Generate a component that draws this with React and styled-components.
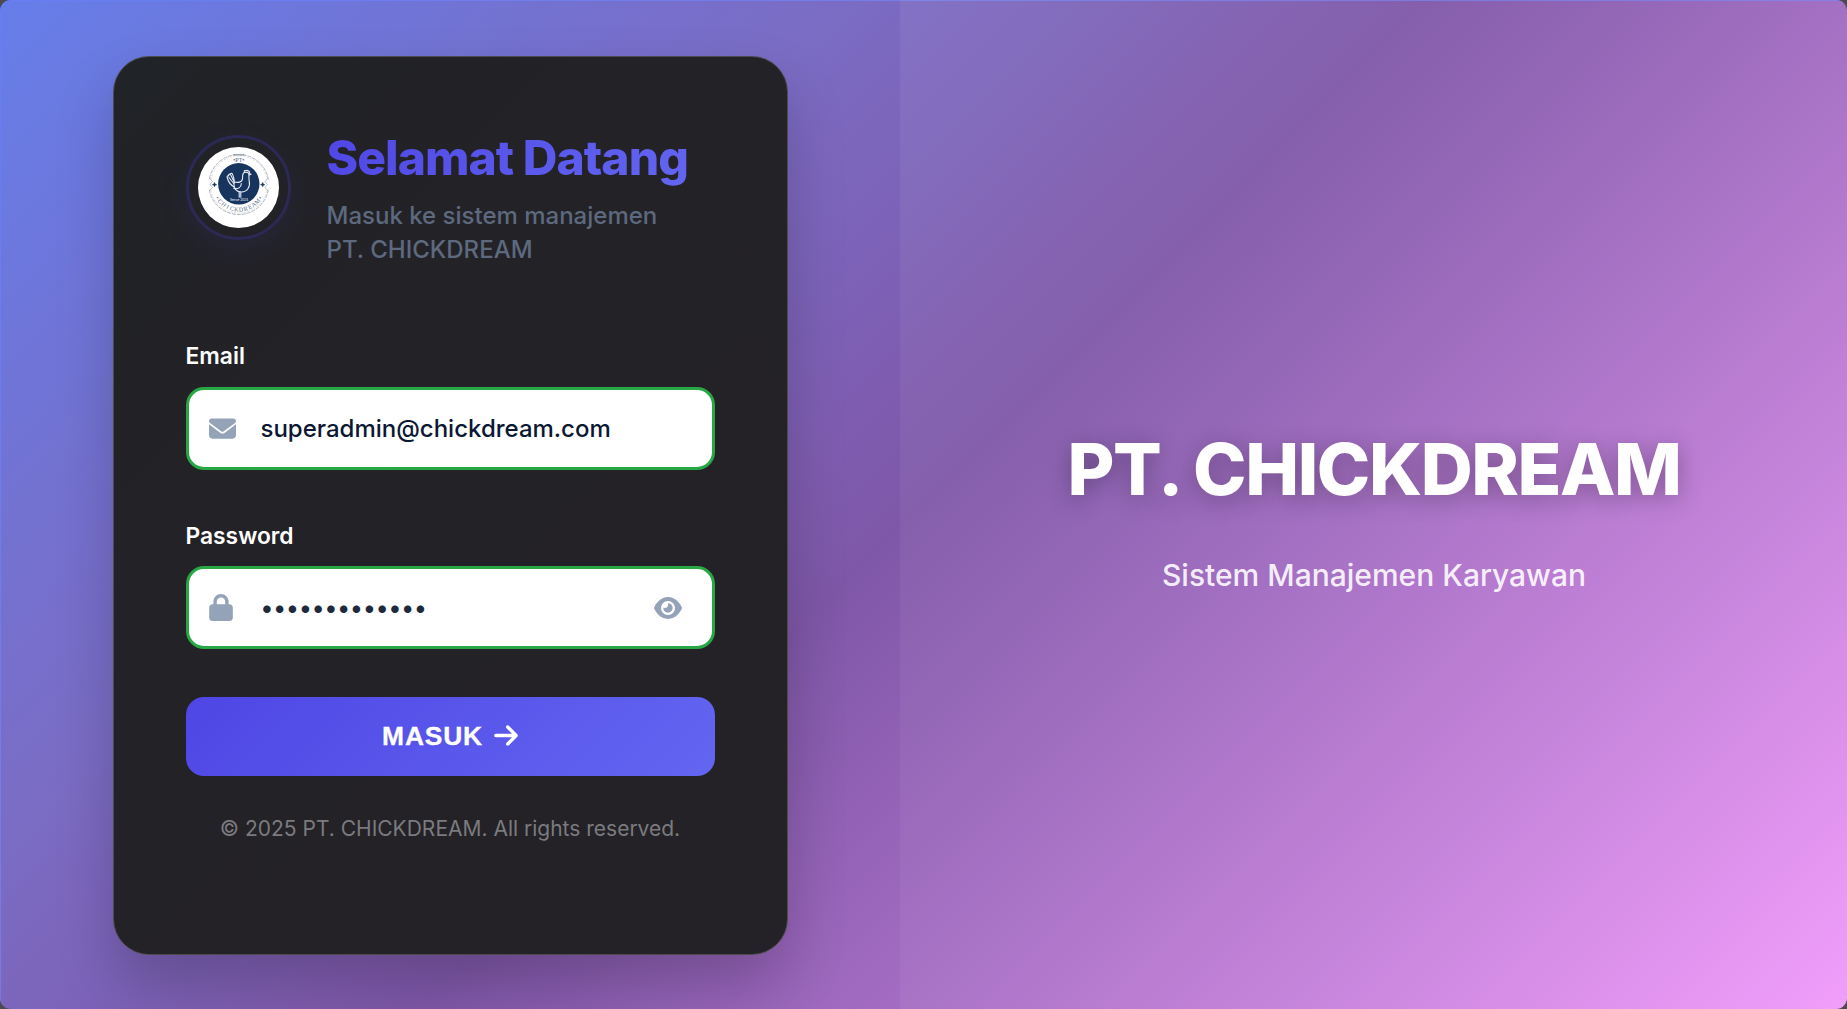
import React from "react";
import styled, { createGlobalStyle } from "styled-components";
import { FaEnvelope, FaLock, FaEye, FaArrowRight } from "react-icons/fa6";

const Global = createGlobalStyle`
  * { box-sizing: border-box; }
  body { margin: 0; background: #4a4a50; font-family: Inter, "Liberation Sans", sans-serif; overflow: hidden; }
`;

const Page = styled.div`
  display: flex;
  width: 100vw;
  height: 100vh;
  border-radius: 11px;
  overflow: hidden;
  background: linear-gradient(135deg, #667eea 0%, #764ba2 50%, #f093fb 100%);
  box-shadow: inset 1px 1px 0 rgba(102, 126, 255, 0.6);
`;

const LeftPanel = styled.section`
  width: 900px;
  display: flex;
  align-items: center;
  justify-content: center;
  background: linear-gradient(135deg, rgba(255, 255, 255, 0) 0%, rgba(255, 255, 255, 0.08) 45%, rgba(255, 255, 255, 0.06) 100%);
`;

const RightPanel = styled.section`
  flex: 1;
  display: flex;
  flex-direction: column;
  align-items: center;
  padding: 425px 0 0 1px;
  background: linear-gradient(135deg, rgba(255, 255, 255, 0.13) 0%, rgba(255, 255, 255, 0.1) 40%, rgba(255, 255, 255, 0.1) 100%);
`;

const Card = styled.main`
  width: 675px;
  height: 899px;
  margin-top: 2px;
  padding: 72px 72px 0;
  border: 1px solid #4d4b4e;
  border-radius: 36px;
  background: linear-gradient(135deg, #202327 0%, #232226 30%, #242227 100%);
  box-shadow: 0 30px 60px rgba(0, 0, 0, 0.2);
`;

const Header = styled.header`
  display: flex;
  height: 142px;
  gap: 36px;
`;

const LogoRing = styled.div`
  width: 105px;
  height: 105px;
  margin-top: 6px;
  border: 3px solid #2c2957;
  border-radius: 50%;
  display: flex;
  align-items: center;
  justify-content: center;
  box-shadow: 0 10px 30px rgba(79, 70, 229, 0.1);
  svg { display: block; flex: none; }
`;

const Title = styled.h1`
  margin: 0;
  font-size: 48px;
  line-height: 58px;
  font-weight: 800;
  letter-spacing: -0.96px;
  white-space: nowrap;
  background: linear-gradient(135deg, #4f46e5, #6366f1);
  -webkit-background-clip: text;
  background-clip: text;
  color: transparent;
`;

const Subtitle = styled.p`
  margin: 12px 0 0;
  font-size: 24px;
  line-height: 34px;
  font-weight: 500;
  color: #5d697f;
  white-space: nowrap;
`;

const Label = styled.label`
  display: block;
  margin-top: ${(p) => p.$top}px;
  height: 30px;
  font-size: 22.8px;
  line-height: 30px;
  font-weight: 600;
  color: #fff;
`;

const Field = styled.div`
  display: flex;
  align-items: center;
  height: 83px;
  margin-top: ${(p) => p.$top}px;
  padding: 0 30px 0 20px;
  border: 3px solid #28a745;
  border-radius: 18px;
  background: #fff;
  color: #94a3b8;
`;

const IconSlot = styled.span`
  display: flex;
  width: 52px;
  svg { display: block; }
`;

const LockSlot = styled(IconSlot)`
  svg { width: 24px; }
`;

const Input = styled.input`
  flex: 1;
  min-width: 0;
  padding: 0;
  border: 0;
  outline: 0;
  background: transparent;
  font: 500 24px Inter, sans-serif;
  color: ${(p) => (p.type === "password" ? "#1e293b" : "#0b1733")};
`;

const Submit = styled.button`
  display: flex;
  align-items: center;
  justify-content: center;
  width: 100%;
  height: 79px;
  margin-top: 48px;
  padding: 0;
  border: 0;
  border-radius: 18px;
  background: linear-gradient(135deg, #4f46e5, #6366f1);
  color: #fff;
  font: 700 26.4px "Liberation Sans", Arial, sans-serif;
  letter-spacing: 0.8px;
  -webkit-text-stroke: 0.3px #fff;
  svg { width: 24px; margin: 0 0 2px 11px; }
`;

const Footer = styled.p`
  margin: 39px 0 0;
  text-align: center;
  font-size: 21px;
  line-height: 28px;
  color: #7b7b7f;
  white-space: nowrap;
`;

const Brand = styled.h2`
  margin: 0;
  font-size: 72px;
  line-height: 88px;
  font-weight: 800;
  letter-spacing: -1.44px;
  color: #fff;
  text-shadow: 0 5px 24px rgba(0, 0, 0, 0.3);
`;

const Tagline = styled.p`
  margin: 43px 0 0;
  font-size: 30px;
  line-height: 38px;
  font-weight: 500;
  color: rgba(255, 255, 255, 0.9);
`;

const ARC_TEXT = [..."•CHICKDREAM•"];

const Logo = () => (
  <svg width="81" height="81" viewBox="0 0 81 81" fill="none">
    <circle cx="40.5" cy="40.5" r="40.5" fill="#fff" />
    <circle cx="40.8" cy="37.5" r="30" stroke="#8f96a1" strokeWidth=".7" strokeDasharray="4 1" />
    <circle cx="40.8" cy="37.5" r="28.6" stroke="#c3c8d0" strokeWidth=".6" strokeDasharray="2 1.4" />
    <path d="M9.5 32.5h4.5v10H9.5zM67.5 32.5H72v10h-4.5z" fill="#fff" />
    <path d="M11.5 31l3 3.5-2.5 3 2.5 3-3 3.5M70 31l-3 3.5 2.5 3-2.5 3 3 3.5" stroke="#9ba3b0" strokeWidth=".7" />
    <path d="M35 7.8h11.5" stroke="#8f96a1" strokeWidth="1.2" />
    <circle cx="40.8" cy="36.8" r="20.7" fill="#17345f" />
    <path d="M16.500 35.300l.7 1.600 1.600.7-1.600.7-.7 1.600-.7-1.600-1.600-.7 1.600-.7zM64.700 35.300l.7 1.600 1.600.7-1.600.7-.7 1.600-.7-1.600-1.600-.7 1.600-.7z" fill="#17345f" stroke="#17345f" strokeWidth=".4" />
    <g stroke="#e8edf5" strokeWidth="1.1" strokeLinecap="round" strokeLinejoin="round">
      <path d="M36.500 35c2.500.6 5.500.3 7-1 1.500-1.500 1-4 1.200-6 .3-1.800 1.500-2.800 3-2.800 2 0 3.300 1 3.300 2.800 0 2-.3 3.500.2 5.500 1.300 6-1.700 11.500-8 11.500-5 0-8-4-7.200-9z" />
      <path d="M46.300 25c-.4-1.500 1-2 1.700-1 .5-1.200 2-1 2 .3 1.200-.5 2 .5 1.300 1.500M51 28l2-.8-2-1" />
      <path d="M36.200 40c-3.500-2-6-5.500-7-9.500-.4-1.600.7-2 1.500-1.500-.5-1.800 1-2.300 1.700-1.300 0-1.700 1.700-1.800 2.200-.3 1 2.300 1.500 5 1.800 7.600M31 30.500l4.800 6M33 28.500l3 6" />
      <path d="M35.800 41.500c4 1 7.500-1 7.500-5M41.200 45v5.300M42.800 45v5.300" />
    </g>
    <text x="41" y="53.600" textAnchor="middle" fontSize="3.2" fill="#fff" fontFamily="Inter, sans-serif">Sense 2024</text>
    <text x="40.800" y="15.200" textAnchor="middle" fontSize="6" fill="#53657f" fontFamily="Liberation Serif, serif">•PT•</text>
    {ARC_TEXT.map((letter, i) => (
      <text
        key={i}
        x="40.8"
        y="64.6"
        textAnchor="middle"
        fontSize="6.2"
        fill="#60718b"
        fontFamily="Liberation Serif, serif"
        transform={`rotate(${(5.5 - i) * 10.6} 40.8 37.5)`}
      >
        {letter}
      </text>
    ))}
  </svg>
);

export default function App() {
  return (
    <>
      <Global />
      <Page>
        <LeftPanel>
          <Card>
            <Header>
              <LogoRing><Logo /></LogoRing>
              <div>
                <Title>Selamat Datang</Title>
                <Subtitle>Masuk ke sistem manajemen<br />PT. CHICKDREAM</Subtitle>
              </div>
            </Header>
            <Label $top={70} htmlFor="email">Email</Label>
            <Field $top={16}>
              <IconSlot><FaEnvelope size={27} /></IconSlot>
              <Input id="email" defaultValue="superadmin@chickdream.com" />
            </Field>
            <Label $top={51} htmlFor="password">Password</Label>
            <Field $top={15}>
              <LockSlot><FaLock size={27} /></LockSlot>
              <Input id="password" type="password" defaultValue="superadmin123" />
              <FaEye size={28} />
            </Field>
            <Submit>MASUK<FaArrowRight size={27} /></Submit>
            <Footer>© 2025 PT. CHICKDREAM. All rights reserved.</Footer>
          </Card>
        </LeftPanel>
        <RightPanel>
          <Brand>PT. CHICKDREAM</Brand>
          <Tagline>Sistem Manajemen Karyawan</Tagline>
        </RightPanel>
      </Page>
    </>
  );
}
